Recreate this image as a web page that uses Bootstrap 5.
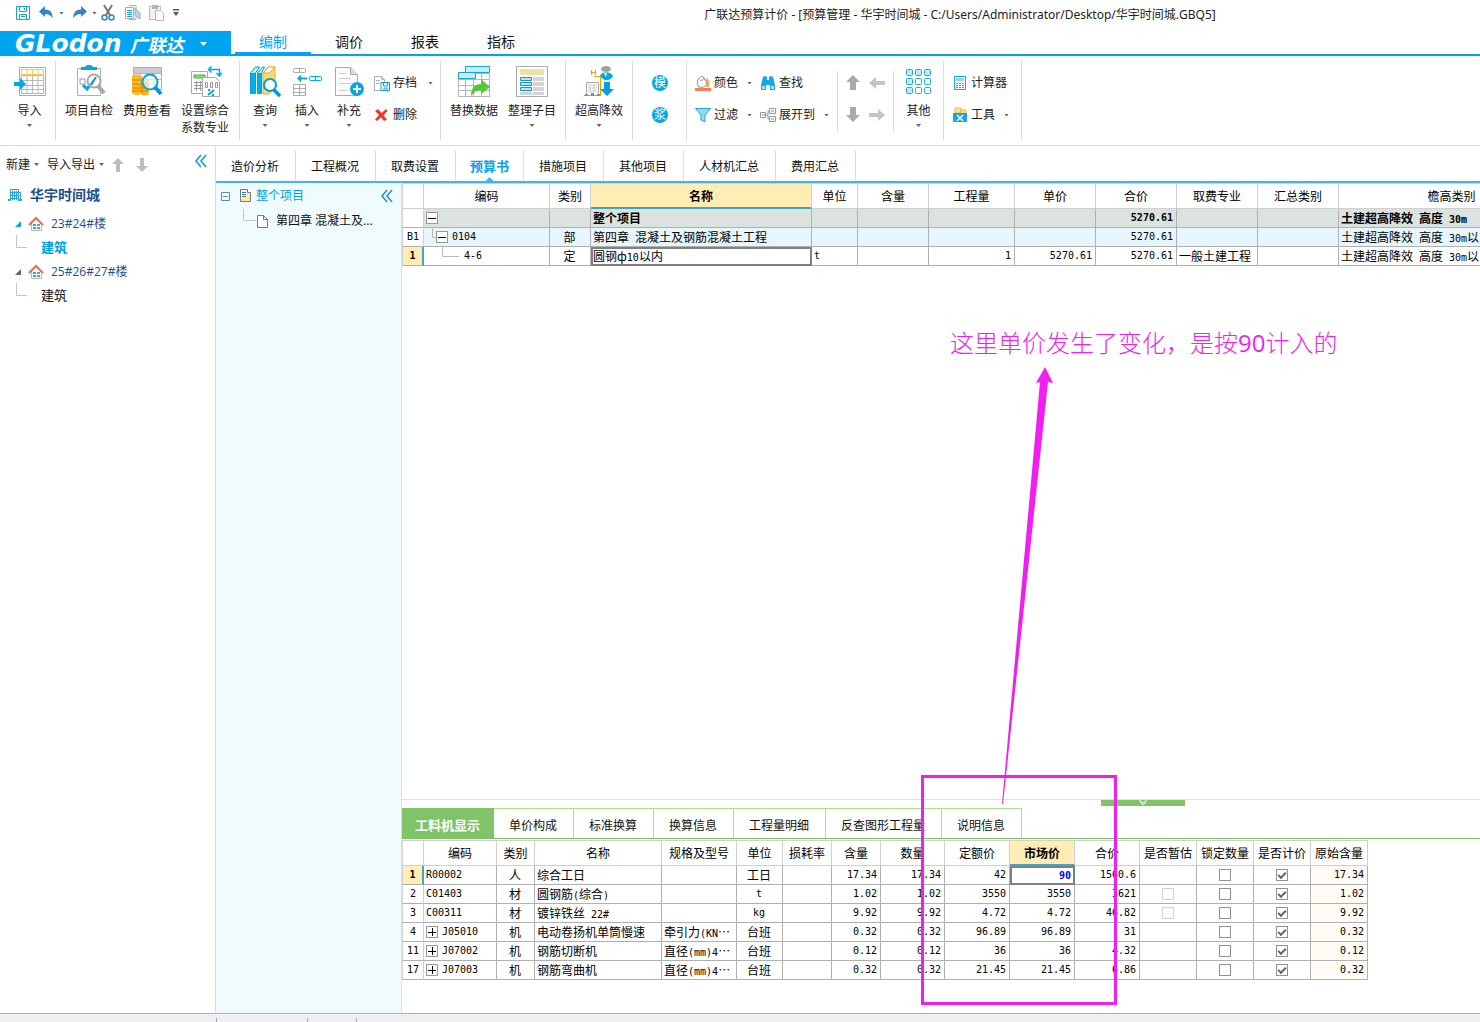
<!DOCTYPE html>
<html lang="zh-CN">
<head>
<meta charset="utf-8">
<meta name="viewport" content="width=device-width, initial-scale=1">
<title>广联达预算计价</title>
<link href="https://cdn.jsdelivr.net/npm/bootstrap@5.3.0/dist/css/bootstrap.min.css" rel="stylesheet">
<style>
:root{--sky:#00a4f0;--ink:#222;--line:#dcdcdc;--grid:#b0b0b0;--leaf:#80c468;--lime:#aee08c}
body{font-family:"Open Sans","Noto Sans CJK SC",sans-serif;font-size:12px;line-height:16px;color:var(--ink);background:#fff;overflow:hidden}
svg{display:block;flex:none}
button{border:0;background:none;padding:0;color:inherit;font-size:12px;line-height:16px}
.app-win{min-height:100vh}
.title-row{height:31px}
.title-text{font-family:"Noto Sans","Noto Sans CJK SC",sans-serif;padding-top:7px}
.quick-bar{width:440px;height:26px;padding-left:15px}
.caret-dn{width:5px;height:3px;background:#666;clip-path:polygon(0 0,100% 0,50% 100%);flex:none}
.menu-row{height:25px;border-bottom:2px solid var(--sky)}
.brand-btn{width:231px;background:var(--sky);color:#fff;padding:3px 0 0 15px;height:23px}
.brand-latin{font:italic bold 25px/22px "DejaVu Sans",sans-serif}
.brand-han{font:italic bold 18px/20px "Noto Sans CJK SC",sans-serif}
.menu-tab{width:76px;height:23px;font-size:14px;line-height:22px;text-align:center;color:#111;text-decoration:none;border-bottom:2px solid transparent}
.menu-tab.on{color:var(--sky);border-color:var(--sky)}
.ribbon{height:90px;padding-top:5px;border-bottom:1px solid var(--line)}
.rb-group{height:79px;border-right:1px solid var(--line);padding:0 4px}
.rb-group.short{height:60px;margin-top:10px}
.rb-group.short>*{margin-top:-10px}
.rb-big{width:58px;padding-top:4px;display:flex;flex-direction:column;align-items:center;line-height:17px}
.rb-big.slim{width:42px}
.rb-big svg{margin-bottom:5px}
.rb-big .caret-dn{margin-top:5px}
.rb-small{height:32px;display:flex;align-items:center;gap:3px}
.rb-small .caret-dn{margin-left:6px}
.rb-stack{padding-top:6px}
.side{width:216px;border-right:1px solid var(--line)}
.side-tools{height:37px;padding-left:6px}
.side-row{height:24px;display:flex;align-items:center;color:#1d4f8c;text-decoration:none}
.side-branch{padding:2px 0 0 15px;gap:7px}
.side-leaf{font-size:13px;padding-left:16px;gap:14px;color:#111}
.side-leaf.on{font-weight:700;color:#00a0dc}
.page-tabs{height:37px;padding-top:4px;border-bottom:2px solid #42b4e6}
.page-tab{padding:9px 16px 0 15px;height:31px;border-right:1px solid var(--line);color:#111;text-decoration:none;white-space:nowrap;position:relative;line-height:16px}
.page-tab.on{color:#00a4f0;font-weight:700;font-size:13px;width:68px;padding:8px 0 0;text-align:center}
.page-tab.on::after{content:"";position:absolute;left:50%;bottom:0;margin-left:-4px;width:8px;height:4px;background:#42b4e6;clip-path:polygon(50% 0,100% 100%,0 100%)}
.tree{width:186px;background:#f0fbfe;border-right:1px solid #d8e4e8}
.tree-row{height:24px;display:flex;align-items:center;color:#111;text-decoration:none}
.sheet{table-layout:fixed;border-collapse:separate;border-spacing:0;width:0;color:#000;font-family:"Noto Sans CJK SC",sans-serif}
.sheet th,.sheet td{height:19px;line-height:14px;vertical-align:middle;padding:0 3px 0 2px;border-right:1px solid var(--grid);border-bottom:1px solid var(--grid);overflow:hidden;white-space:nowrap;font-weight:400}
.sheet thead th{height:26px;text-align:center;padding:0;border-color:#d0d0d0;border-top:1px solid #d0d0d0}
.sheet tr>:first-child{border-left:1px solid #d0d0d0;border-right-color:#d0d0d0;text-align:center;padding:0}
.sheet thead th.hot{background:#ffedb3;font-weight:700;border-bottom:2px solid #3ca5d0}
.sheet tbody th.pick{background:#ffedb3;border-right:2px solid #3ca5d0;font-weight:700}
.sheet .n{font-family:"DejaVu Sans Mono",monospace;font-size:10px}
.sheet span.n{line-height:12px}
.sheet td.n{text-align:right;padding-right:3px}
.sheet td.code{text-align:left}
.sheet td.mid{text-align:center}
.sheet td.focus-cell{border:2px solid #808080;padding-left:0;padding-right:2px}
.sheet tr.total td{background:#dae3de;font-weight:700}
.sheet tr.chapter td{background:#e6f6fc}
.sheet td.origin{background:#fffbf5}
.sheet .boxed{width:12px;height:12px;border:1px solid #999;background:#fff;display:grid;place-items:center;flex:none}
.tick{appearance:none;display:block;width:12px;height:12px;margin:0 auto;border:1px solid #909090;background:#fff;position:relative}
.tick:disabled{border-color:#d2d2d2}
.tick:checked::after{content:"";position:absolute;left:1px;top:2px;width:8px;height:5px;border:solid #5a6478;border-width:0 0 2px 2px;transform:rotate(-45deg)}
.splitter{height:9px;border-top:1px solid #e0e0e0;padding-right:295px}
.split-grip{width:84px;height:6px;background:var(--leaf)}
.detail-tabs{height:31px;border-bottom:1px solid var(--leaf);margin-bottom:1px}
.detail-tab{padding:9px 16px 0 15px;height:30px;border-right:1px solid var(--lime);border-top:1px solid var(--lime);color:#111;text-decoration:none;white-space:nowrap}
.detail-tab.on{background:var(--leaf);border-color:var(--leaf);color:#fff;font-weight:700;font-size:13px;width:92px;padding:8px 0 0;text-align:center}
.detail{padding-bottom:33px}
.status{height:9px;background:#f0f0f0;border-top:1px solid var(--grid)}
.status span{border-right:1px solid #9aa0b0;height:4px}
.note{position:absolute;color:#f01ef0}
.note-text{left:950px;top:326px;font-size:24px;line-height:34px;font-weight:300;white-space:nowrap}
.note-box{left:921px;top:775px;width:196px;height:230px;border:3px solid #f01ef0}
.note-arrow{left:996px;top:366px}
.notes{pointer-events:none}
.badge-dot{width:16px;height:16px;border-radius:50%;background:#00a8e8;color:#fff;line-height:16px;text-align:center}
</style>
<script src="https://cdn.jsdelivr.net/npm/bootstrap@5.3.0/dist/js/bootstrap.bundle.min.js"></script>
</head>
<body>
<div class="app-win d-flex flex-column position-relative">

<header>
<div class="title-row d-flex">
  <div class="quick-bar d-flex align-items-center">
    <button aria-label="保存"><svg width="16" height="16" fill="none" stroke="#12a5d8"><path d="M1.500 1.500h13v13h-13z"/><path d="M4.500 1.500v5h7v-5M4.500 14.500v-5h7v5M6 11.500h4M9.500 3v2"/></svg></button>
    <button class="ms-1 ps-1" aria-label="撤销"><svg width="16" height="16"><path d="M6 1v3.500c5 0 8 3 7.500 9C11.500 10 9.500 9 6 9v3L0 6.500z" fill="#2f86c8"/></svg></button>
    <i class="caret-dn ms-1"></i>
    <button class="ms-2" aria-label="重做"><svg width="16" height="16"><path d="M9 1v3.500c-5 0-8 3-7.500 9C3.500 10 5.500 9 9 9v3l6-5.500z" fill="#2f86c8"/></svg></button>
    <i class="caret-dn ms-1"></i>
    <button class="ms-1" aria-label="剪切"><svg width="16" height="18" fill="none"><path d="M3 1l6 10M11 1L5 11" stroke="#777" stroke-width="2"/><circle cx="3.500" cy="13.500" r="2.500" stroke="#2f86c8" stroke-width="1.500"/><circle cx="10.500" cy="13.500" r="2.500" stroke="#2f86c8" stroke-width="1.500"/></svg></button>
    <button class="ms-1 ps-1" aria-label="复制"><svg width="16" height="16"><path d="M4 .500h7v14H4" fill="#fff" stroke="#aaa"/><path d="M.500 2.500h8v11h-8z" fill="#fff" stroke="#aaa"/><path d="M2 5.500h5M2 7.500h5M2 9.500h5M2 11.500h5" stroke="#12a5d8"/><path d="M10 3l5 5v6l-5-4z" fill="#9fdcf2" stroke="#aaa"/></svg></button>
    <button class="ms-1 ps-1" aria-label="粘贴"><svg width="16" height="18"><path d="M.500 2.500h11v13H.500z" fill="#f2f2f2" stroke="#bbb"/><path d="M3 1h6v4H3z" fill="#b5b5b5"/><path d="M6.500 6.500h5l3 3v7h-8z" fill="#fff" stroke="#bbb"/></svg></button>
    <button class="ms-2" aria-label="自定义"><svg width="6" height="8" fill="#555"><path d="M0 0h6v1.500H0zM0 3h6L3 7z"/></svg></button>
  </div>
  <div class="title-text flex-grow-1 text-center text-nowrap">广联达预算计价 - [预算管理 - 华宇时间城 - C:/Users/Administrator/Desktop/华宇时间城.GBQ5]</div>
</div>
<nav class="menu-row d-flex" aria-label="主菜单">
  <button class="brand-btn d-flex align-items-center me-1"><span class="brand-latin">GLodon</span><span class="brand-han ms-1 ps-1">广联达</span><svg class="ms-3" width="7" height="4" fill="#fff"><path d="M0 0h7L3.500 4z"/></svg></button>
  <a class="menu-tab on" href="#">编制</a><a class="menu-tab" href="#">调价</a><a class="menu-tab" href="#">报表</a><a class="menu-tab" href="#">指标</a>
</nav>
<div class="ribbon d-flex" role="toolbar" aria-label="功能区">
  <div class="rb-group d-flex ps-1 pe-0" style="width:56px">
    <button class="rb-big"><svg width="34" height="32" fill="none"><path d="M6.500 2.500h26v28h-26z" stroke="#aaa" fill="#fff"/><path d="M8.500 4.500h22v5h-22zM14 4v5M19.500 4v5M25 4v5" stroke="#ffc84a"/><path d="M8.500 10.500h22v18h-22zM14 10v18M19.500 10v18M25 10v18M8 15.500h22M8 20.500h22M8 24.500h22" stroke="#b8b8b8"/><path d="M1 17h6v-4l6 6-6 6v-4H1z" fill="#00a8e8"/></svg>导入<i class="caret-dn"></i></button>
  </div>
  <div class="rb-group d-flex">
    <button class="rb-big"><svg width="34" height="32" fill="none"><path d="M5.500 3.500h23v27h-23z" stroke="#b0b0b0"/><path d="M9 5V2h4l2-2h4l2 2h4v3z" fill="#00a8e8"/><path d="M8 14h5v5H8z" stroke="#999"/><path d="M11 20l4 4 7-9" stroke="#00a8e8" stroke-width="3"/><circle cx="22" cy="16" r="6.500" fill="#fff" fill-opacity=".6" stroke="#aaa" stroke-width="2"/><path d="M26 21l6 7" stroke="#aaa" stroke-width="4"/><path d="M24 12l-5 8" stroke="#3a8bb0" stroke-width="2"/></svg>项目自检</button>
    <button class="rb-big"><svg width="34" height="32" fill="none"><path d="M3.500 2.500h28v22h-28zM10 3v20M17 3v20M24 3v20M4 8.500h27M4 14.500h27" stroke="#b0b0b0"/><path d="M4 3h27v5H4z" fill="#ccc"/><path d="M2 11c3-2 7-2 10 0v4c3-2 5-1 7 0v14c-3 2-6 2-8 0-3 2-7 1-9-1z" fill="#ffb81f"/><path d="M2 15h10M2 19h16M2 23h16M2 26h16M12 13v16" stroke="#d97f00"/><circle cx="20" cy="17" r="7.500" fill="#edf8fc" fill-opacity=".7" stroke="#00a8e8" stroke-width="2"/><path d="M25 22l6 7" stroke="#0098dc" stroke-width="4"/></svg>费用查看</button>
    <button class="rb-big"><svg width="34" height="32" fill="none"><path d="M3.500 6.500h16v22h-16z" stroke="#aaa" fill="#fff"/><path d="M6 10h11v3H6z" fill="#8bd978" stroke="#51b338"/><path d="M6 17.500h12M6 20.500h12M6 23.500h12M8.500 16v10M12.500 16v10" stroke="#999"/><path d="M14.500 12.500h13l4 4v15h-17z" stroke="#aaa" fill="#fff"/><path d="M17.500 17.500h2v5h-2zM22.500 17.500h2v5h-2zM27.500 17.500h2v5h-2z" stroke="#999"/><path d="M26 25l-6 5M20 25h2M24 30h2" stroke="#00a8e8" stroke-width="2"/><path d="M21 4.500h10.500V10M23.500 1.500l-3 3 3 3M28.500 8l3 3 2-3" stroke="#00a8e8" stroke-width="1.500"/></svg>设置综合<span>系数专业</span></button>
    <span style="width:1px"></span>
  </div>
  <div class="rb-group d-flex">
    <button class="rb-big slim"><svg width="32" height="32" fill="none"><path d="M1.500 8l5-6h4L6.500 8v20.500h-5zM8.500 28.500V8l5-6h2l-3 6v20.500z" fill="#c5edf9" stroke="#00a0d8"/><path d="M2 8h4v20H2zM9 8h3v20H9z" fill="#00b0ee"/><path d="M14 8l5-6h7v20l-6 7h-6z" fill="#ffd96b" stroke="#dcae3e"/><path d="M14.500 8l5-6h6l-5 6z" fill="#fff" stroke="#dcae3e"/><circle cx="21" cy="20" r="6" fill="#fff" stroke="#00a0d8" stroke-width="2"/><path d="M25 25l6 6" stroke="#0098dc" stroke-width="3.500"/></svg>查询<i class="caret-dn"></i></button>
    <button class="rb-big slim"><svg width="32" height="32" fill="none"><rect x="2.500" y="3.500" width="12" height="4" rx="1" stroke="#aaa"/><path d="M8.500 4v4" stroke="#aaa"/><path d="M6 13.500l4-4v3h6v2h-6v3z" fill="#00a8e8"/><rect x="18.500" y="11.500" width="12" height="4" rx="1" stroke="#00a8e8"/><path d="M24.500 12v4" stroke="#00a8e8"/><path d="M2.500 19.500h12v11h-12zM8.500 20v10M3 23.500h11M3 27.500h11" stroke="#aaa"/></svg>插入<i class="caret-dn"></i></button>
    <button class="rb-big slim"><svg width="32" height="32" fill="none"><path d="M2.500 2.500h15l7 7v21h-22z" fill="#fcfcfc" stroke="#aaa"/><path d="M17.500 2.500v7h7" fill="#ddd" stroke="#aaa"/><path d="M6 8.500h7M6 13.500h12M6 18.500h12M6 25.500h8" stroke="#ccc"/><circle cx="24" cy="24" r="7" fill="#0aa5e4"/><path d="M24 20v8M20 24h8" stroke="#fff" stroke-width="2"/></svg>补充<i class="caret-dn"></i></button>
    <div class="rb-stack ps-1">
      <button class="rb-small"><svg width="16" height="16" fill="none"><path d="M.500 1.500h7l3 3v11H.500zM7.500 1.500v3h3M2 5.500h4M2 8.500h4" stroke="#b0b0b0"/><path d="M7 7.500h8.500v8H7z" fill="#fff" stroke="#00a8e8"/><path d="M9.500 8v3h4V8M10 15v-2h3v2" stroke="#00a8e8"/></svg>存档<i class="caret-dn ms-2"></i></button>
      <button class="rb-small"><svg width="16" height="16"><path d="M1 4l3-2 3.500 4L12 2l1.500 2-4 4.500 3.500 4-3 1.500-3-3.500L3 14l-2-1.500 4-4.500z" fill="#ea3a2e"/></svg>删除</button>
    </div>
    <span style="width:3px"></span>
  </div>
  <div class="rb-group d-flex">
    <button class="rb-big"><svg width="34" height="32" fill="none"><path d="M1.500 8.500h31v23h-31zM8.500 9v22M16.500 9v22M24.500 9v22M2 14.500h30M2 20.500h30M2 25.500h30" stroke="#b5b5b5"/><path d="M8.500 1.500h24v6h-24zM1.500 7.500h17v6h-17z" fill="#c2edfa" stroke="#16a6d0"/><path d="M14 31c0-8 4-12 10-12v-5l9 8-9 7v-4c-4 0-7 2-10 6z" fill="#55c836"/></svg>替换数据</button>
    <button class="rb-big"><svg width="34" height="32" fill="none"><path d="M1.500 1.500h31v30h-31z" stroke="#aaa"/><path d="M5 4h24v6H5z" fill="#f2dfa8"/><path d="M18 12h11v4H18zM18 17h11v4H18zM18 22h11v4H18zM5 27h12v3H5zM18 27h11v3H18z" fill="#d4d4d8"/><path d="M5.500 12.500h11v3h-11zM5.500 17.500h11v3h-11zM5.500 22.500h11v3h-11z" fill="#b9e4f5" stroke="#1697d0"/></svg>整理子目<i class="caret-dn"></i></button>
  </div>
  <div class="rb-group d-flex">
    <button class="rb-big"><svg width="34" height="32" fill="none"><path d="M4.500 17.500h12v13h-12z" stroke="#aaa" fill="#fff"/><path d="M6 20h9M6 23h9M6 26h9M8 19v9M12 19v9" stroke="#ccc"/><path d="M2 31c1-3 4-3 5 0M14 31c1-3 4-3 5 0" fill="#60b050"/><path d="M9 28h3v3H9z" fill="#2fa0e0"/><path d="M9.500 5v5M13.500 5v5M9 7.500h4M12 11.500h7M18.500 11v19" stroke="#f5a000"/><ellipse cx="24" cy="4" rx="5" ry="3" fill="#a0a0a0"/><path d="M18 11c1-5 11-5 13 0-2 5-9 6-13 0z" fill="#08a8e8"/><path d="M22 8h3l-1 4z" fill="#fff"/><path d="M22 17h6v7h4l-7 7-7-7h4z" fill="#00a0e4"/></svg>超高降效<i class="caret-dn"></i></button>
  </div>
  <div class="rb-group rb-stack d-flex flex-column" style="width:54px;padding-left:19px">
    <button class="rb-small"><span class="badge-dot">模</span></button><button class="rb-small"><span class="badge-dot">浆</span></button>
  </div>
  <div class="rb-group short d-flex ps-2" style="width:151px">
    <div class="rb-stack">
      <button class="rb-small"><svg width="16" height="16" fill="none"><path d="M0 13h16v3H0z" fill="#ff7a52"/><path d="M11 3c4 1 4 6 3 9h-3z" fill="#ffb060"/><path d="M3 5c2-4 5-5 6-2l3 5c-1 4-5 5-8 4-2-2-2-5-1-7z" fill="#fff" stroke="#888"/><path d="M5 5c2 1 3 0 4-2" stroke="#888"/></svg>颜色<i class="caret-dn"></i></button>
      <button class="rb-small"><svg width="16" height="16"><path d="M.500 1.500h15L10 8v7l-4-2V8z" fill="#8adcf8" stroke="#24a5d8"/></svg>过滤<i class="caret-dn"></i></button>
    </div>
    <div class="rb-stack ms-2">
      <button class="rb-small"><svg width="16" height="16"><path d="M3 2l2-1 2 1v3h2V2l2-1 2 1 2 8v5h-5v-5H6v5H1v-5z" fill="#16a8e0"/><path d="M2 11h3v3H2zM11 11h3v3h-3z" fill="#a9e3f8"/></svg>查找</button>
      <button class="rb-small"><svg width="16" height="16" fill="none" stroke="#999"><path d="M.500 5.500h5v5h-5zM9.500 1.500h6v5h-6zM9.500 9.500h6v5h-6zM6 8h2V4h1M8 8v4h1"/><path d="M2 8h3M11 4h3M11 12h3" stroke="#2baadf"/></svg>展开到<i class="caret-dn"></i></button>
    </div>
  </div>
  <div class="rb-group short d-flex" style="width:56px;padding-left:7px">
    <div class="rb-stack"><button class="rb-small" aria-label="上移"><svg width="16" height="16" fill="#aaa"><path d="M8 0l7 7h-4v8H5V7H1z"/></svg></button><button class="rb-small" aria-label="下移"><svg width="16" height="16" fill="#aaa"><path d="M8 15L1 8h4V0h6v8h4z"/></svg></button></div>
    <div class="rb-stack ms-2"><button class="rb-small" aria-label="左移"><svg width="17" height="16" fill="#c4c4c4"><path d="M0 8l7-6v4h9v4H7v4z"/></svg></button><button class="rb-small" aria-label="右移"><svg width="17" height="16" fill="#c4c4c4"><path d="M16 8L9 2v4H0v4h9v4z"/></svg></button></div>
  </div>
  <div class="rb-group d-flex" style="width:50px">
    <button class="rb-big slim"><svg width="28" height="32" fill="#c2e9f7" stroke="#19acdf"><rect x="1.500" y="4.500" width="6" height="6" rx="1"/><rect x="10.500" y="4.500" width="6" height="6" rx="1"/><rect x="19.500" y="4.500" width="6" height="6" rx="1"/><rect x="1.500" y="13.500" width="6" height="6" rx="1"/><rect x="1.500" y="22.500" width="6" height="6" rx="1"/><g fill="#fff"><rect x="10.500" y="13.500" width="6" height="6" rx="1"/><rect x="19.500" y="13.500" width="6" height="6" rx="1"/><rect x="10.500" y="22.500" width="6" height="6" rx="1"/><rect x="19.500" y="22.500" width="6" height="6" rx="1"/></g></svg>其他<i class="caret-dn"></i></button>
  </div>
  <div class="rb-group rb-stack d-flex flex-column ps-2" style="width:78px">
    <button class="rb-small"><svg width="16" height="16" fill="none"><path d="M2.500 1.500h11v13h-11z" stroke="#1ba6dc"/><path d="M4 3h8v3H4z" fill="#8cd6f0"/><path d="M4 8.500h8M4 10.500h8M4 12.500h8" stroke="#1ba6dc" stroke-dasharray="2 1"/><path d="M10 8.500h2" stroke="#f06040"/></svg>计算器</button>
    <button class="rb-small"><svg width="16" height="16" fill="none"><path d="M3 1h6v5H3zM9 3h5v4H9z" fill="#ffe08a" stroke="#e6b840"/><path d="M1 6h14v9H1z" fill="#16a5e2"/><path d="M5 8l6 6M11 8l-6 6" stroke="#fff" stroke-width="1.500"/></svg>工具<i class="caret-dn"></i></button>
  </div>
</div>
</header>

<main class="d-flex flex-grow-1">
  <aside class="side flex-shrink-0">
    <div class="side-tools d-flex align-items-center">
      <button class="text-nowrap">新建</button><i class="caret-dn ms-1"></i>
      <button class="text-nowrap ms-2">导入导出</button><i class="caret-dn ms-1"></i>
      <button class="ms-2" aria-label="上移"><svg width="12" height="14" fill="#bdbdbd"><path d="M6 0l6 6H8v8H4V6H0z"/></svg></button>
      <button class="ms-2 ps-1" aria-label="下移"><svg width="12" height="14" fill="#bdbdbd"><path d="M6 14L0 8h4V0h4v8h4z"/></svg></button>
      <button class="ms-auto me-1 pe-1 pb-2" aria-label="收起"><svg width="12" height="14" fill="none" stroke="#1796c6" stroke-width="1.500"><path d="M6 1L1 7l5 6M11 1L6 7l5 6"/></svg></button>
    </div>
    <nav aria-label="工程">
      <a class="side-row fw-bold mb-1" href="#" style="font-size:14px;padding-left:7px;gap:7px"><svg width="16" height="16" fill="none"><path d="M3.500 14V2.500h8V14M11.500 5.500h2V14" stroke="#2aa5d8" fill="#d9f3fc"/><path d="M5.500 4v9M7.500 4v9M9.500 4v9M4 5.500h8M4 8.500h8M4 11.500h8" stroke="#2aa5d8"/><path d="M1 12h3v2H1zM12 12h3v2h-3z" fill="#58b048"/></svg>华宇时间城</a>
      <a class="side-row side-branch" href="#"><svg width="6" height="6" fill="#1aa5e0"><path d="M6 0v6H0z"/></svg><svg width="16" height="16" fill="none"><path d="M3.500 7v7.500h10V7" stroke="#b8b8b8"/><path d="M1 9l7-7 7 7" stroke="#ee6a4c" stroke-width="2"/><path d="M5 8h3v2H5zM9 8h3v2H9zM5 11h3v2H5zM9 11h3v2H9z" fill="#3aa8e8"/></svg>23#24#楼</a>
      <a class="side-row side-leaf on" href="#"><svg width="11" height="24" stroke="#c4c4c4" fill="none"><path d="M.500 0v12.500H11"/></svg>建筑</a>
      <a class="side-row side-branch" href="#"><svg width="6" height="6" fill="#666"><path d="M6 0v6H0z"/></svg><svg width="16" height="16" fill="none"><path d="M3.500 7v7.500h10V7" stroke="#b8b8b8"/><path d="M1 9l7-7 7 7" stroke="#ee6a4c" stroke-width="2"/><path d="M5 8h3v2H5zM9 8h3v2H9zM5 11h3v2H5zM9 11h3v2H9z" fill="#3aa8e8"/></svg>25#26#27#楼</a>
      <a class="side-row side-leaf" href="#"><svg width="11" height="24" stroke="#c4c4c4" fill="none"><path d="M.500 0v12.500H11"/></svg>建筑</a>
    </nav>
  </aside>

  <section class="d-flex flex-column flex-grow-1 overflow-hidden">
    <nav class="page-tabs d-flex" aria-label="页面">
      <a class="page-tab" href="#">造价分析</a><a class="page-tab" href="#">工程概况</a><a class="page-tab" href="#">取费设置</a><a class="page-tab on" href="#">预算书</a><a class="page-tab" href="#">措施项目</a><a class="page-tab" href="#">其他项目</a><a class="page-tab" href="#">人材机汇总</a><a class="page-tab" href="#">费用汇总</a>
    </nav>
    <div class="d-flex flex-grow-1">
      <div class="tree flex-shrink-0">
        <div class="d-flex align-items-center">
          <a class="tree-row flex-grow-1" href="#" style="padding-left:5px;color:#00a0dc;height:26px"><svg width="9" height="9" fill="none" stroke="#5f8ea0"><path d="M.500.500h8v8h-8zM2 4.500h5"/></svg><svg class="ms-2 me-1" width="14" height="14" fill="none"><path d="M2.500.500h7v9h-7z" fill="#fff" stroke="#777"/><path d="M9.500 3.500h3v9h-10v-3" fill="#ffeaa8" stroke="#777"/><path d="M4 3.500h4M4 5.500h4M4 7.500h4" stroke="#2c86b0"/></svg><span>整个项目</span></a>
          <button class="me-1 pe-1" aria-label="收起"><svg width="12" height="14" fill="none" stroke="#1796c6" stroke-width="1.500"><path d="M6 1L1 7l5 6M11 1L6 7l5 6"/></svg></button>
        </div>
        <a class="tree-row" href="#" style="padding-left:27px"><svg width="14" height="24" fill="none" stroke="#c4c4c4"><path d="M.500 0v11.500H13"/></svg><svg class="me-2" width="11" height="13"><path d="M.500.500h6l4 4v8H.500zM6.500.500v4h4" fill="#fff" stroke="#777"/></svg>第四章 混凝土及...</a>
      </div>
      <div class="d-flex flex-column flex-grow-1 overflow-hidden">
        <div class="flex-grow-1">
          <table class="sheet">
            <colgroup><col style="width:22px"><col style="width:126px"><col style="width:41px"><col style="width:221px"><col style="width:46px"><col style="width:71px"><col style="width:86px"><col style="width:81px"><col style="width:81px"><col style="width:81px"><col style="width:81px"><col style="width:226px"></colgroup>
            <thead><tr><th></th><th>编码</th><th>类别</th><th class="hot">名称</th><th>单位</th><th>含量</th><th>工程量</th><th>单价</th><th>合价</th><th>取费专业</th><th>汇总类别</th><th>檐高类别</th></tr></thead>
            <tbody>
            <tr class="total"><th></th><td><button class="boxed" aria-label="折叠"><svg width="8" height="8" stroke="#000"><path d="M0 4.500h8"/></svg></button></td><td></td><td>整个项目</td><td></td><td></td><td></td><td></td><td class="n">5270.61</td><td></td><td></td><td>土建超高降效&ensp;高度&ensp;<span class="n">30m</span></td></tr>
            <tr class="chapter"><th class="n">B1</th><td><div class="d-flex align-items-center"><svg width="10" height="18" fill="none" stroke="#b8b8b8"><path d="M6.500 0v9.500H10"/></svg><button class="boxed me-1" aria-label="折叠"><svg width="8" height="8" stroke="#000"><path d="M0 4.500h8"/></svg></button><span class="n">0104</span></div></td><td class="mid">部</td><td>第四章&ensp;混凝土及钢筋混凝土工程</td><td></td><td></td><td></td><td></td><td class="n">5270.61</td><td></td><td></td><td>土建超高降效&ensp;高度&ensp;<span class="n">30m</span>以</td></tr>
            <tr><th class="n pick">1</th><td><div class="d-flex align-items-center"><svg class="me-1" width="34" height="18" fill="none" stroke="#b8b8b8"><path d="M16.500 0v9.500H33"/></svg><span class="n">4-6</span></div></td><td class="mid">定</td><td class="focus-cell">圆钢ф<span class="n">10</span>以内</td><td class="n code">t</td><td></td><td class="n">1</td><td class="n">5270.61</td><td class="n">5270.61</td><td>一般土建工程</td><td></td><td>土建超高降效&ensp;高度&ensp;<span class="n">30m</span>以</td></tr>
            </tbody>
          </table>
        </div>
        <div class="splitter d-flex justify-content-end"><button class="split-grip d-flex justify-content-center" aria-label="收起明细"><svg width="10" height="6" fill="none" stroke="#fff"><path d="M1 0l4 3 4-3M2 2l3 3 3-3"/></svg></button></div>
        <nav class="detail-tabs d-flex" aria-label="明细">
          <a class="detail-tab on" href="#">工料机显示</a><a class="detail-tab" href="#">单价构成</a><a class="detail-tab" href="#">标准换算</a><a class="detail-tab" href="#">换算信息</a><a class="detail-tab" href="#">工程量明细</a><a class="detail-tab" href="#">反查图形工程量</a><a class="detail-tab" href="#">说明信息</a>
        </nav>
        <div class="detail">
          <table class="sheet">
            <colgroup><col style="width:22px"><col style="width:73px"><col style="width:38px"><col style="width:127px"><col style="width:75px"><col style="width:46px"><col style="width:49px"><col style="width:49px"><col style="width:64px"><col style="width:65px"><col style="width:65px"><col style="width:65px"><col style="width:57px"><col style="width:57px"><col style="width:57px"><col style="width:57px"></colgroup>
            <thead><tr><th></th><th>编码</th><th>类别</th><th>名称</th><th>规格及型号</th><th>单位</th><th>损耗率</th><th>含量</th><th>数量</th><th>定额价</th><th class="hot">市场价</th><th>合价</th><th>是否暂估</th><th>锁定数量</th><th>是否计价</th><th>原始含量</th></tr></thead>
            <tbody>
            <tr><th class="n pick">1</th><td class="n code">R00002</td><td class="mid">人</td><td>综合工日</td><td></td><td class="mid">工日</td><td></td><td class="n">17.34</td><td class="n">17.34</td><td class="n">42</td><td class="n focus-cell fw-bold" style="color:#00f">90</td><td class="n">1560.6</td><td></td><td><input class="tick" type="checkbox" aria-label="锁定数量"></td><td><input class="tick" type="checkbox" checked aria-label="是否计价"></td><td class="n origin">17.34</td></tr>
            <tr><th class="n">2</th><td class="n code">C01403</td><td class="mid">材</td><td>圆钢筋<span class="n">(</span>综合<span class="n">)</span></td><td></td><td class="n mid">t</td><td></td><td class="n">1.02</td><td class="n">1.02</td><td class="n">3550</td><td class="n">3550</td><td class="n">3621</td><td><input class="tick" type="checkbox" disabled aria-label="是否暂估"></td><td><input class="tick" type="checkbox" aria-label="锁定数量"></td><td><input class="tick" type="checkbox" checked aria-label="是否计价"></td><td class="n origin">1.02</td></tr>
            <tr><th class="n">3</th><td class="n code">C00311</td><td class="mid">材</td><td>镀锌铁丝&ensp;<span class="n">22#</span></td><td></td><td class="n mid">kg</td><td></td><td class="n">9.92</td><td class="n">9.92</td><td class="n">4.72</td><td class="n">4.72</td><td class="n">46.82</td><td><input class="tick" type="checkbox" disabled aria-label="是否暂估"></td><td><input class="tick" type="checkbox" aria-label="锁定数量"></td><td><input class="tick" type="checkbox" checked aria-label="是否计价"></td><td class="n origin">9.92</td></tr>
            <tr><th class="n">4</th><td><div class="d-flex align-items-center"><button class="boxed me-1" aria-label="展开"><svg width="8" height="8" stroke="#000"><path d="M0 4.500h8M4.500 0v8"/></svg></button><span class="n">J05010</span></div></td><td class="mid">机</td><td>电动卷扬机单筒慢速</td><td>牵引力<span class="n">(KN</span>⋯</td><td class="mid">台班</td><td></td><td class="n">0.32</td><td class="n">0.32</td><td class="n">96.89</td><td class="n">96.89</td><td class="n">31</td><td></td><td><input class="tick" type="checkbox" aria-label="锁定数量"></td><td><input class="tick" type="checkbox" checked aria-label="是否计价"></td><td class="n origin">0.32</td></tr>
            <tr><th class="n">11</th><td><div class="d-flex align-items-center"><button class="boxed me-1" aria-label="展开"><svg width="8" height="8" stroke="#000"><path d="M0 4.500h8M4.500 0v8"/></svg></button><span class="n">J07002</span></div></td><td class="mid">机</td><td>钢筋切断机</td><td>直径<span class="n">(mm)4</span>⋯</td><td class="mid">台班</td><td></td><td class="n">0.12</td><td class="n">0.12</td><td class="n">36</td><td class="n">36</td><td class="n">4.32</td><td></td><td><input class="tick" type="checkbox" aria-label="锁定数量"></td><td><input class="tick" type="checkbox" checked aria-label="是否计价"></td><td class="n origin">0.12</td></tr>
            <tr><th class="n">17</th><td><div class="d-flex align-items-center"><button class="boxed me-1" aria-label="展开"><svg width="8" height="8" stroke="#000"><path d="M0 4.500h8M4.500 0v8"/></svg></button><span class="n">J07003</span></div></td><td class="mid">机</td><td>钢筋弯曲机</td><td>直径<span class="n">(mm)4</span>⋯</td><td class="mid">台班</td><td></td><td class="n">0.32</td><td class="n">0.32</td><td class="n">21.45</td><td class="n">21.45</td><td class="n">6.86</td><td></td><td><input class="tick" type="checkbox" aria-label="锁定数量"></td><td><input class="tick" type="checkbox" checked aria-label="是否计价"></td><td class="n origin">0.32</td></tr>
            </tbody>
          </table>
        </div>
      </div>
    </div>
  </section>
</main>
<footer class="status d-flex align-items-end"><span style="width:217px"></span><span style="width:91px"></span><span style="width:49px"></span></footer>

<div class="notes">
  <div class="note note-text">这里单价发生了变化，是按<span class="fw-normal">90</span>计入的</div>
  <div class="note note-box"></div>
  <svg class="note note-arrow" width="60" height="440" fill="#f01ef0"><path d="M49 1l8 16-5-1L7 438H6L44 16l-4 1z"/></svg>
</div>
</div>
</body>
</html>
